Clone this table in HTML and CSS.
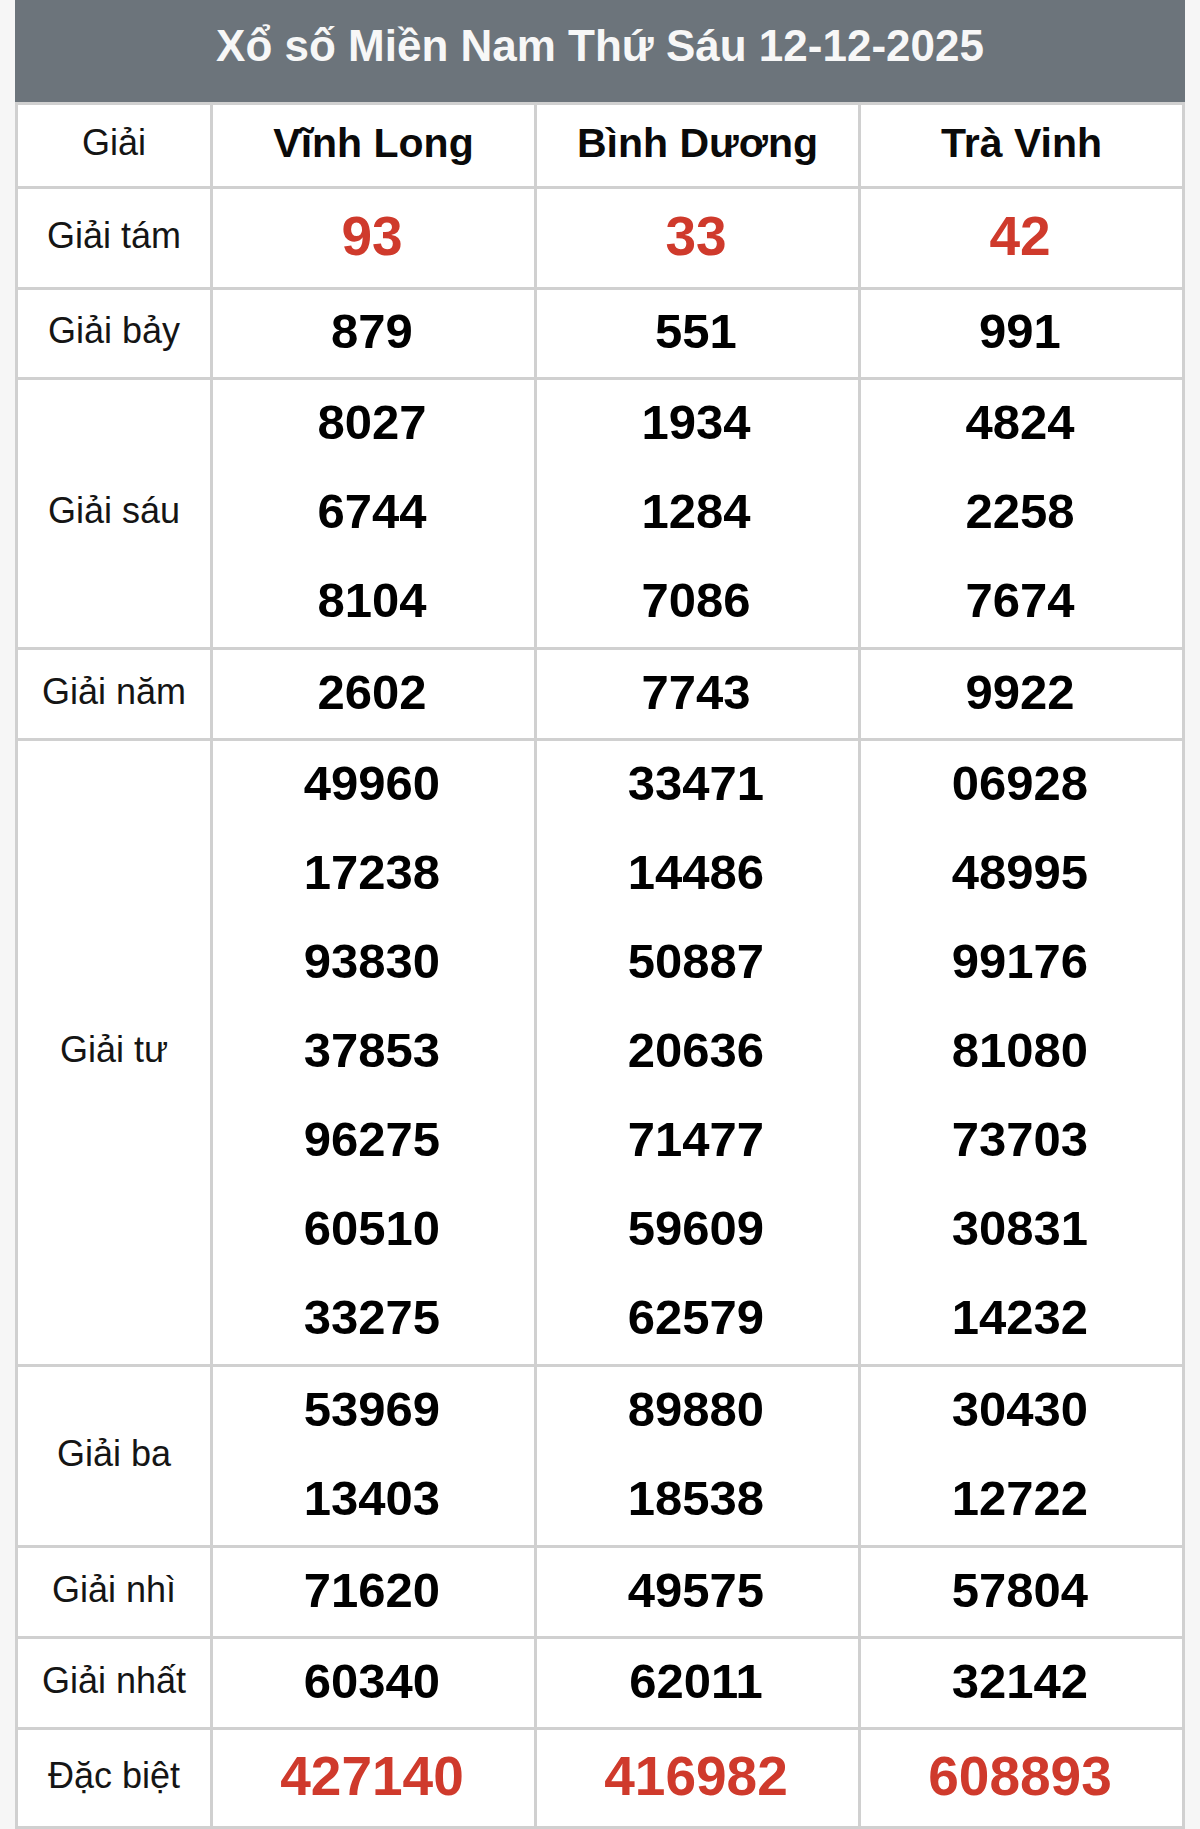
FILE: index.html
```html
<!DOCTYPE html>
<html lang="vi">
<head>
<meta charset="utf-8">
<title>Xổ số Miền Nam Thứ Sáu 12-12-2025</title>
<link rel="stylesheet" href="styles.css">
</head>
<body>
<div class="wrap">
  <div class="title">Xổ số Miền Nam Thứ Sáu 12-12-2025</div>
  <div class="board">
    <div class="cell label">Giải</div>
    <div class="cell station">Vĩnh Long</div>
    <div class="cell station">Bình Dương</div>
    <div class="cell station">Trà Vinh</div>

    <div class="cell label">Giải tám</div>
    <div class="cell nums red big"><span>93</span></div>
    <div class="cell nums red big"><span>33</span></div>
    <div class="cell nums red big"><span>42</span></div>

    <div class="cell label">Giải bảy</div>
    <div class="cell nums"><span>879</span></div>
    <div class="cell nums"><span>551</span></div>
    <div class="cell nums"><span>991</span></div>

    <div class="cell label">Giải sáu</div>
    <div class="cell nums"><span>8027</span><span>6744</span><span>8104</span></div>
    <div class="cell nums"><span>1934</span><span>1284</span><span>7086</span></div>
    <div class="cell nums"><span>4824</span><span>2258</span><span>7674</span></div>

    <div class="cell label">Giải năm</div>
    <div class="cell nums"><span>2602</span></div>
    <div class="cell nums"><span>7743</span></div>
    <div class="cell nums"><span>9922</span></div>

    <div class="cell label">Giải tư</div>
    <div class="cell nums"><span>49960</span><span>17238</span><span>93830</span><span>37853</span><span>96275</span><span>60510</span><span>33275</span></div>
    <div class="cell nums"><span>33471</span><span>14486</span><span>50887</span><span>20636</span><span>71477</span><span>59609</span><span>62579</span></div>
    <div class="cell nums"><span>06928</span><span>48995</span><span>99176</span><span>81080</span><span>73703</span><span>30831</span><span>14232</span></div>

    <div class="cell label">Giải ba</div>
    <div class="cell nums"><span>53969</span><span>13403</span></div>
    <div class="cell nums"><span>89880</span><span>18538</span></div>
    <div class="cell nums"><span>30430</span><span>12722</span></div>

    <div class="cell label">Giải nhì</div>
    <div class="cell nums"><span>71620</span></div>
    <div class="cell nums"><span>49575</span></div>
    <div class="cell nums"><span>57804</span></div>

    <div class="cell label">Giải nhất</div>
    <div class="cell nums"><span>60340</span></div>
    <div class="cell nums"><span>62011</span></div>
    <div class="cell nums"><span>32142</span></div>

    <div class="cell label">Đặc biệt</div>
    <div class="cell nums red big"><span>427140</span></div>
    <div class="cell nums red big"><span>416982</span></div>
    <div class="cell nums red big"><span>608893</span></div>
  </div>
</div>
</body>
</html>
```
FILE: styles.css
```css
* {
  box-sizing: border-box;
}

html, body {
  margin: 0;
  padding: 0;
}

body {
  background: #f6f6f6;
  font-family: "Liberation Sans", Arial, sans-serif;
  color: #111;
}

.wrap {
  width: 1170px;
  margin: 0 auto;
}

.title {
  height: 102px;
  line-height: 92px;
  padding-bottom: 10px;
  background: #6c747b;
  color: #f7f7f7;
  font-size: 44px;
  font-weight: bold;
  text-align: center;
  white-space: nowrap;
}

.board {
  display: grid;
  grid-template-columns: 192px repeat(3, 1fr);
  grid-template-rows: 81px 98px 87px 267px 88px 623px 178px 88px 88px 96px;
  gap: 3px;
  padding: 3px;
  background: #d0d0d0;
}

.cell {
  background: #fff;
  display: flex;
  align-items: center;
  justify-content: center;
}

.label,
.station {
  padding-bottom: 5px;
}

.label {
  font-size: 36px;
  color: #151515;
}

.station {
  font-size: 41px;
  font-weight: bold;
  color: #0a0a0a;
}

.nums {
  flex-direction: column;
  align-items: stretch;
  padding-right: 3px;
}

.nums span {
  flex: 1;
  display: flex;
  align-items: center;
  justify-content: center;
  padding-bottom: 5px;
  font-size: 49px;
  font-weight: bold;
  color: #000;
}

.red span {
  color: #cf3a2c;
}

.big span {
  font-size: 55px;
}
```
